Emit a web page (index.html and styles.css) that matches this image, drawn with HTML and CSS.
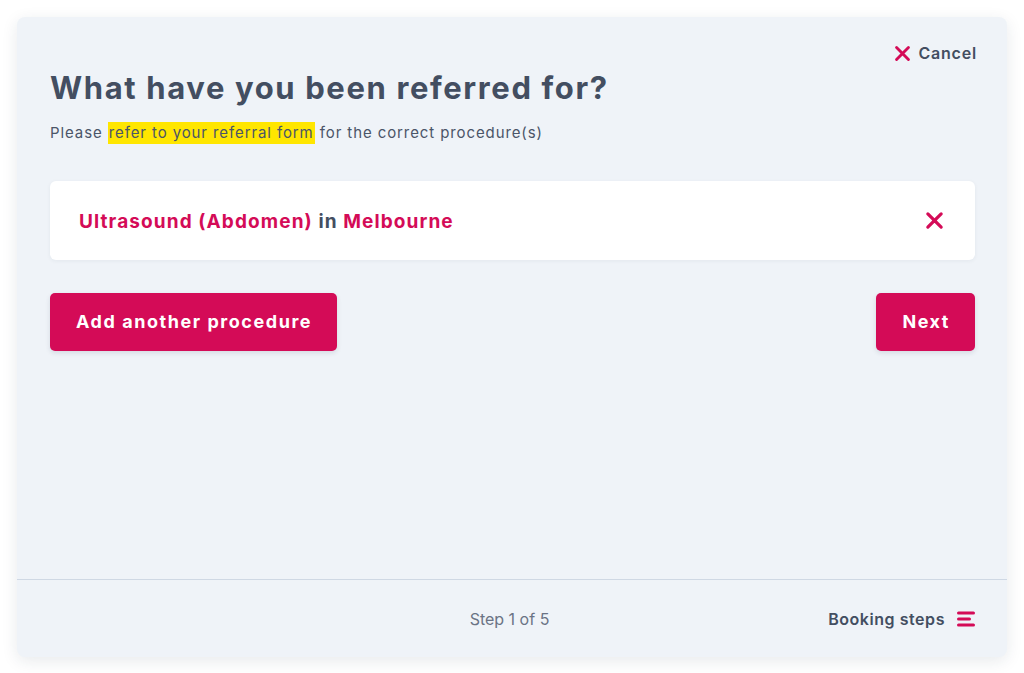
FILE: index.html
```html
<!DOCTYPE html>
<html lang="en">
<head>
<meta charset="utf-8">
<title>What have you been referred for?</title>
<link rel="stylesheet" href="styles.css">
</head>
<body>
<div class="card">
  <div class="content">
    <div class="top-row">
      <button class="cancel" type="button">
        <svg class="x-icon small" viewBox="0 0 20 20" aria-hidden="true"><path d="M3 3 L17 17 M17 3 L3 17"/></svg>
        <span>Cancel</span>
      </button>
    </div>
    <h1 class="title">What have you been referred for?</h1>
    <p class="subtitle">Please <span class="hl">refer to your referral form</span> for the correct procedure(s)</p>
    <div class="procedure">
      <div class="procedure-text"><span class="accent">Ultrasound (Abdomen)</span> in <span class="accent">Melbourne</span></div>
      <button class="remove" type="button" aria-label="Remove">
        <svg class="x-icon" viewBox="0 0 20 20" aria-hidden="true"><path d="M3 3 L17 17 M17 3 L3 17"/></svg>
      </button>
    </div>
    <div class="actions">
      <button class="btn" type="button">Add another procedure</button>
      <button class="btn" type="button">Next</button>
    </div>
  </div>
  <div class="footer">
    <div class="footer-side"></div>
    <div class="step">Step 1 of 5</div>
    <div class="footer-side right">
      <span class="steps-label">Booking steps</span>
      <svg class="menu-icon" viewBox="0 0 18 18" aria-hidden="true">
        <path d="M1.5 3 H16.5 M1.5 9 H12.5 M1.5 15 H16.5"/>
      </svg>
    </div>
  </div>
</div>
</body>
</html>
```

FILE: styles.css
```css
* { box-sizing: border-box; }
html, body { margin: 0; padding: 0; background: #ffffff; }
body {
  padding: 17px;
  font-family: "Inter", "Liberation Sans", sans-serif;
  color: #434e61;
}
.card {
  width: 990px;
  height: 640px;
  background: #eff3f8;
  border-radius: 8px;
  box-shadow: 0 4px 16px rgba(30, 45, 70, 0.10);
  display: flex;
  flex-direction: column;
}
.content {
  flex: 1;
  padding: 23px 32px 0 33px;
}
.top-row {
  display: flex;
  justify-content: flex-end;
  height: 26px;
  margin-right: -2px;
}
.cancel {
  display: flex;
  align-items: center;
  gap: 7px;
  border: 0;
  background: none;
  padding: 0;
  font: 600 16px/26px "Inter", "Liberation Sans", sans-serif;
  letter-spacing: 0.8px;
  color: #434e61;
  cursor: pointer;
}
.x-icon {
  width: 19px;
  height: 19px;
  fill: none;
  stroke: #d40b57;
  stroke-width: 3.4;
  stroke-linecap: round;
}
.x-icon.small { width: 17px; height: 17px; }
.title {
  margin: 0;
  font-size: 31px;
  line-height: 44px;
  font-weight: 700;
  color: #434e61;
  letter-spacing: 1.62px;
}
.subtitle {
  margin: 12px 0 0;
  font-size: 15px;
  line-height: 22px;
  color: #4b5568;
  letter-spacing: 0.9px;
}
.hl {
  display: inline-block;
  background: #ffe600;
  padding: 0 1px;
}
.procedure {
  margin-top: 37px;
  height: 79px;
  background: #ffffff;
  border-radius: 6px;
  box-shadow: 0 1px 4px rgba(30, 45, 70, 0.06);
  display: flex;
  align-items: center;
  justify-content: space-between;
  padding: 0 31px 0 29px;
}
.procedure-text {
  font-size: 19px;
  font-weight: 700;
  color: #434e61;
  letter-spacing: 1.1px;
  padding-top: 2px;
}
.accent { color: #d40b57; }
.remove {
  border: 0;
  background: none;
  padding: 0;
  display: flex;
  cursor: pointer;
}
.actions {
  margin-top: 33px;
  display: flex;
  justify-content: space-between;
}
.btn {
  height: 58px;
  padding: 0 25px 0 26px;
  border: 0;
  border-radius: 5px;
  background: #d40b57;
  color: #ffffff;
  font: 700 18px/1 "Inter", "Liberation Sans", sans-serif;
  letter-spacing: 1.55px;
  box-shadow: 0 2px 5px rgba(30, 45, 70, 0.12);
  cursor: pointer;
}
.footer {
  height: 78px;
  border-top: 1px solid #cfd8e4;
  display: grid;
  grid-template-columns: 1fr auto 1fr;
  align-items: center;
  padding: 0 32px 0 33px;
}
.step {
  font-size: 16px;
  color: #6b7385;
  margin-right: 6px;
}
.footer-side.right {
  display: flex;
  justify-content: flex-end;
  align-items: center;
  gap: 12px;
}
.steps-label {
  font-size: 16px;
  font-weight: 600;
  color: #434e61;
  letter-spacing: 0.55px;
}
.menu-icon {
  width: 18px;
  height: 18px;
  fill: none;
  stroke: #d40b57;
  stroke-width: 3;
  stroke-linecap: round;
}
```
